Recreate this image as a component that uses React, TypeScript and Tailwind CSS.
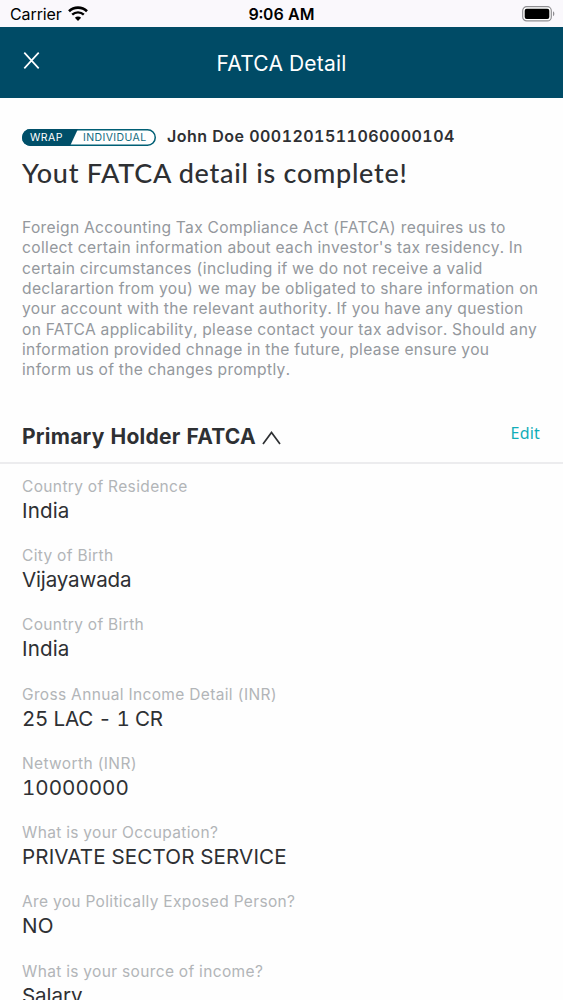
const description = [
  "Foreign Accounting Tax Compliance Act (FATCA) requires us to",
  "collect certain information about each investor's tax residency. In",
  "certain circumstances (including if we do not receive a valid",
  "declarartion from you) we may be obligated to share information on",
  "your account with the relevant authority. If you have any question",
  "on FATCA applicability, please contact your tax advisor. Should any",
  "information provided chnage in the future, please ensure you",
  "inform us of the changes promptly.",
];

const details = [
  { label: "Country of Residence", value: "India" },
  { label: "City of Birth", value: "Vijayawada", spacing: "tracking-[-0.17px]" },
  { label: "Country of Birth", value: "India" },
  { label: "Gross Annual Income Detail (INR)", value: "25 LAC - 1 CR", spacing: "tracking-[-0.25px]" },
  { label: "Networth (INR)", value: "10000000", spacing: "tracking-normal" },
  { label: "What is your Occupation?", value: "PRIVATE SECTOR SERVICE" },
  { label: "Are you Politically Exposed Person?", value: "NO" },
  { label: "What is your source of income?", value: "Salary", spacing: "tracking-[-0.1px]" },
];

function StatusBar() {
  return (
    <div className="grid h-[27px] grid-cols-3 items-center bg-[#faf8fc] pl-[10px] pr-[8px] text-[16px] text-black">
      <div className="flex items-center gap-[7px]">
        <span className="tracking-[-0.1px]">Carrier</span>
        <svg className="-ml-px" width="20" height="15" viewBox="0 0 20 15" fill="none" stroke="black">
          <path d="M1 5.2a13 13 0 0 1 18 0" strokeWidth="2.6" />
          <path d="M4.2 8.7a8.4 8.4 0 0 1 11.6 0" strokeWidth="2.4" />
          <path d="M10 15l-3.1-3.2a4.4 4.4 0 0 1 6.2 0z" fill="black" stroke="none" />
        </svg>
      </div>
      <span className="pr-[2px] pt-[1px] text-center font-semibold">9:06 AM</span>
      <svg className="justify-self-end" width="33" height="16" viewBox="0 0 33 16">
        <rect x="0.7" y="0.7" width="28.6" height="14.2" rx="4" fill="white" stroke="#8f8e92" strokeWidth="1.2" />
        <rect x="2.7" y="2.7" width="24.6" height="10.2" rx="2" fill="black" />
        <path d="M31 5.3c1.8.8 1.8 4.2 0 5z" fill="#8f8e92" />
      </svg>
    </div>
  );
}

function Header() {
  return (
    <div className="flex h-[71px] items-center bg-[#004b66] px-[23px] text-white">
      <svg className="mb-[5px]" width="17" height="17" viewBox="0 0 17 17" fill="none" stroke="white" strokeWidth="1.7">
        <path d="M1.3 0.7l14.4 15.6M15.7 0.7L1.3 16.3" />
      </svg>
      <h1 className="mr-[17px] flex-1 pt-[2px] text-center text-[21px] tracking-[0.2px]">FATCA Detail</h1>
    </div>
  );
}

function AccountBadge() {
  return (
    <div className="relative flex h-[17px] w-[134px] items-center pt-[2px] text-[10.5px] leading-none">
      <svg className="absolute inset-0" width="134" height="17" viewBox="0 0 134 17">
        <rect x="0.75" y="0.75" width="132.5" height="15.5" rx="7.75" fill="white" stroke="#005f75" strokeWidth="1.5" />
        <path d="M8.5 0H56L48 17H8.5a8.5 8.5 0 0 1 0-17z" fill="#004f69" />
      </svg>
      <span className="relative ml-[8px] w-[53px] tracking-[0.5px] text-white">WRAP</span>
      <span className="relative tracking-[0.4px] text-[#146b80]">INDIVIDUAL</span>
    </div>
  );
}

export default function App() {
  return (
    <div className="h-[1000px] w-[563px] overflow-hidden bg-[#fefefe] font-['Inter',sans-serif] tabular-nums text-[#2e3033]">
      <StatusBar />
      <Header />

      <div className="px-[22px] pt-[28px]">
        <div className="flex h-[22px] items-center gap-[11px]">
          <AccountBadge />
          <span className="whitespace-nowrap pb-[2px] text-[16px] font-semibold tracking-[0.47px]">
            John Doe 0001201511060000104
          </span>
        </div>
        <h2 className="mt-[9px] font-['Lato',sans-serif] text-[27px] font-medium leading-[32px] tracking-[0.72px]">
          Yout FATCA detail is complete!
        </h2>
        <div className="mt-[29px] whitespace-nowrap text-[15.6px] leading-[20.35px] tracking-[0.33px] text-[#94989d]">
          {description.map((line) => (
            <p key={line}>{line}</p>
          ))}
        </div>
      </div>

      <div className="mt-[40px] flex h-[43px] items-start justify-between border-b-2 border-[#ececee] pl-[22px] pr-[23px]">
        <div className="flex items-center gap-[6px]">
          <h3 className="text-[21px] font-bold leading-[32px] tracking-[0.25px]">Primary Holder FATCA</h3>
          <svg className="mt-[3px]" width="19" height="14" viewBox="0 0 19 14" fill="none" stroke="#2e3033" strokeWidth="1.7">
            <path d="M1 13L9.5 1.5L18 13" />
          </svg>
        </div>
        <button className="font-['Noto_Sans',sans-serif] text-[16px] leading-[25px] tracking-[0.2px] text-[#12adb8]">Edit</button>
      </div>

      <div className="px-[22px] pt-[11px]">
        {details.map((item) => (
          <div key={item.label} className="h-[69.25px] whitespace-nowrap">
            <p className="text-[15.5px] leading-[24px] tracking-[0.36px] text-[#b2b5b8]">{item.label}</p>
            <p className={`text-[20.6px] leading-[24px] ${item.spacing ?? "tracking-[0.13px]"}`}>{item.value}</p>
          </div>
        ))}
      </div>
    </div>
  );
}
